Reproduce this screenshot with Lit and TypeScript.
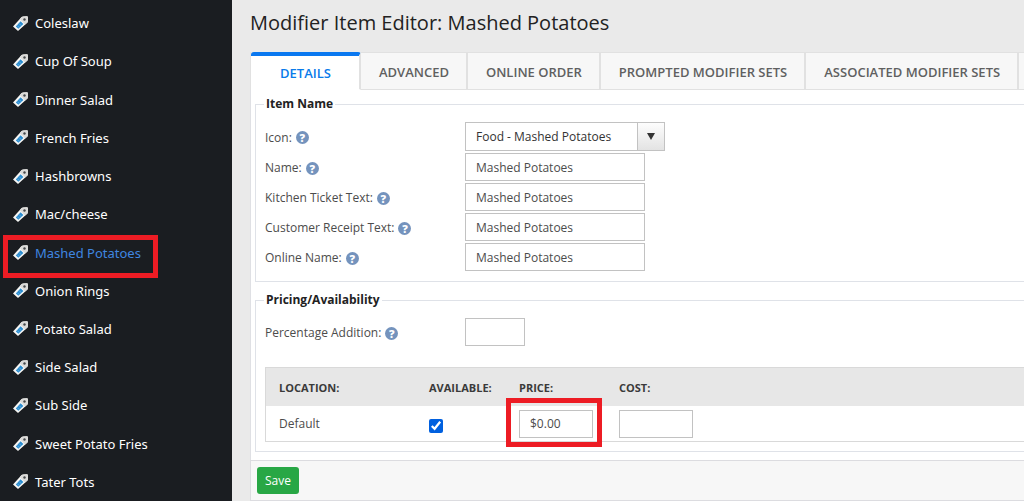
import { LitElement, html, css, svg } from "lit";
import { customElement, property, state } from "lit/decorators.js";
import { classMap } from "lit/directives/class-map.js";

const ITEMS = [
  "Coleslaw", "Cup Of Soup", "Dinner Salad", "French Fries", "Hashbrowns",
  "Mac/cheese", "Mashed Potatoes", "Onion Rings", "Potato Salad", "Side Salad",
  "Sub Side", "Sweet Potato Fries", "Tater Tots",
];

const TABS = [
  "DETAILS", "ADVANCED", "ONLINE ORDER", "PROMPTED MODIFIER SETS", "ASSOCIATED MODIFIER SETS",
];

const NAME_FIELDS = [
  { id: "name", label: "Name:" },
  { id: "kitchen", label: "Kitchen Ticket Text:" },
  { id: "receipt", label: "Customer Receipt Text:" },
  { id: "online", label: "Online Name:" },
];

const tagIcon = svg`
  <path d="M0 10.4 L8.6 1.1 Q9.2 0.4 10.2 0.4 L13.6 0.2 Q15 0.2 15 1.6 L14.9 5.2 Q14.8 6.2 14.2 6.8 L5 15 Z" fill="#f6f6f4"/>
  <path d="M8.6 1.1 Q9.2 0.4 10.2 0.4 L13.6 0.2 Q15 0.2 15 1.6 L14.9 5.2 Q14.8 6.2 14.2 6.8 L12.2 8.6 L6.8 3.1 Z" fill="#dadad8"/>
  <circle cx="11.5" cy="3.5" r="1.2" fill="#45484b"/>
  <path d="M2.8 10.4 L7.6 5.2 L10.4 8 L5.4 12.8 Z" fill="#2b8ccf"/>
  <path d="M4.4 9.7 L6.3 11.6 M6.3 7.7 L8.4 9.8" stroke="#8cc8ee" stroke-width="0.6"/>
`;

@customElement("item-sidebar")
export class ItemSidebar extends LitElement {
  @property() selected = "";

  static styles = css`
    :host { display: flex; flex-direction: column; background: #1a1d21; }
    .list {
      display: flex; flex-direction: column; flex: 1;
      list-style: none; margin: 0; padding: 4px 0 0;
    }
    .row { display: flex; flex: 1; min-height: 38px; position: relative; }
    .link {
      display: flex; align-items: center; gap: 7px; flex: 1;
      padding: 0 13px; color: #fff; text-decoration: none;
      font: 400 13px/18px "Noto Sans", "Open Sans", sans-serif;
    }
    .icon { flex: none; width: 15px; height: 15px; }
    .active .link { color: #3f86e0; }
    .active::after {
      content: ""; position: absolute; left: 3px; top: 2px;
      width: 155px; height: 43px; box-sizing: border-box;
      border: 5px solid #ed1c24; pointer-events: none; z-index: 1;
    }
  `;

  render() {
    return html`<ul class="list">
      ${ITEMS.map((name) => html`
        <li class=${classMap({ row: true, active: name === this.selected })}>
          <a class="link" href="#">
            <svg class="icon" viewBox="0 0 15 15" aria-hidden="true">${tagIcon}</svg>${name}
          </a>
        </li>`)}
    </ul>`;
  }
}

@customElement("app-root")
export class AppRoot extends LitElement {
  @state() private item = "Mashed Potatoes";
  @state() private tab = "DETAILS";

  static styles = css`
    :host {
      display: grid; grid-template-columns: 232px minmax(0, 1fr);
      min-height: 100vh; background: #eaeaea; color: #4c4c4c;
      font: 12px/18px "Open Sans", "Noto Sans", sans-serif;
    }
    .main { padding-left: 18px; overflow: hidden; }
    .title { margin: 0; padding: 8px 0 14px; font-size: 20px; line-height: 30px; font-weight: 400; color: #222; }
    .tabs { display: flex; height: 38px; box-sizing: border-box; border-left: 1px solid #e1e1e1; }
    .tab {
      flex: none; margin: 0; padding: 2px 17px 0 18px; border: solid #e1e1e1;
      border-width: 1px 2px 1px 0; background: #f7f7f7; color: #606060;
      font: 600 13px/18px "Open Sans", sans-serif; cursor: pointer;
    }
    .tab.on {
      padding: 0 28px 0 29px; background: #fff; color: #0a7bea; border-color: #e1e1e1;
      border-top: 4px solid #0a78f0; border-bottom-color: #fff; border-radius: 3px 3px 0 0;
    }
    .rest { flex: 1; background: #f7f7f7; border: solid #e1e1e1; border-width: 1px 0; }
    .panel { background: #fff; border-left: 1px solid #dfe0e4; padding: 4px 0 8px 4px; }
    .group { margin: 0 0 8px; padding: 0; min-width: 0; border: 1px solid #dfe2e8; border-right: 0; }
    .group:last-child { margin: 0; }
    .legend { margin-left: 8px; padding: 0 2px; font-weight: 700; line-height: 20px; color: #222; }
    .fields { display: grid; gap: 2px; padding: 8px 0 10px 9px; }
    .field { display: grid; grid-template-columns: 200px minmax(0, 1fr); align-items: center; }
    .label { display: flex; align-items: center; gap: 4px; padding-top: 2px; }
    .help {
      display: grid; place-items: center; width: 13px; height: 13px;
      border-radius: 50%; background: #7493bd; color: #fff;
      font: 800 11px/13px "Open Sans", sans-serif;
    }
    .box {
      box-sizing: border-box; width: 180px; height: 28px; padding: 0 10px;
      border: 1px solid #c2c2c2; border-radius: 0; background: #fff; color: #4c4c4c;
      font: 12px/18px "Open Sans", sans-serif;
    }
    .box.short { width: 60px; }
    .box.money { width: 74px; }
    .combo { display: grid; grid-template-columns: 1fr 28px; width: 200px; height: 29px; }
    .select {
      grid-area: 1 / 1 / 2 / 3; appearance: none; width: 100%; height: 29px; color: #333;
    }
    .arrow {
      grid-area: 1 / 2; box-sizing: border-box; display: grid; place-items: center;
      border: 1px solid #c2c2c2; pointer-events: none;
      background: linear-gradient(#fdfdfd, #e3e3e3);
    }
    .pricing { padding: 8px 0 9px 9px; display: grid; gap: 21px; }
    .table { width: 100%; border-collapse: separate; border-spacing: 0; border: 1px solid #d9d9d9; border-right: 0; table-layout: fixed; }
    .c-loc { width: 150px; }
    .c-avail { width: 90px; }
    .c-price { width: 100px; }
    .th {
      height: 38px; padding: 2px 0 0 13px; box-sizing: border-box; text-align: left;
      background: #e7e7e7; color: #3a3a3a; font-size: 11px; line-height: 16px; font-weight: 700;
    }
    .td { height: 35px; padding: 0 0 0 13px; box-sizing: border-box; position: relative; }
    .td .box { display: block; }
    .check { display: block; width: 14px; height: 14px; margin: 4px 0 0; accent-color: #0060df; }
    .marked::after {
      content: ""; position: absolute; left: 0; top: -8px;
      width: 96px; height: 49px; box-sizing: border-box;
      border: 5px solid #ed1c24; pointer-events: none;
    }
    .footer {
      background: #f7f7f7; border: 1px solid #dcdce0; border-right: 0; padding: 6px;
      display: flex;
    }
    .save {
      height: 27px; padding: 0 8px; border: 0; border-radius: 3px; background: #28a745; color: #fff;
      font: 12px/18px "Open Sans", sans-serif; cursor: pointer;
    }
  `;

  private label(id: string, text: string) {
    return html`<label class="label" for=${id}>${text}<span class="help" aria-hidden="true">?</span></label>`;
  }

  render() {
    return html`
      <item-sidebar .selected=${this.item}></item-sidebar>
      <main class="main">
        <h1 class="title">Modifier Item Editor: ${this.item}</h1>
        <div class="tabs" role="tablist">
          ${TABS.map((t) => html`
            <button class=${classMap({ tab: true, on: t === this.tab })} role="tab"
              aria-selected=${t === this.tab} @click=${() => (this.tab = t)}>${t}</button>`)}
          <div class="rest"></div>
        </div>
        <div class="panel">
          <fieldset class="group">
            <legend class="legend">Item Name</legend>
            <div class="fields">
              <div class="field">
                ${this.label("icon", "Icon:")}
                <div class="combo">
                  <select class="box select" id="icon"><option>Food - Mashed Potatoes</option></select>
                  <span class="arrow"><svg width="8" height="7" viewBox="0 0 8 7" aria-hidden="true"><path d="M0 0H8L4 7Z" fill="#333"/></svg></span>
                </div>
              </div>
              ${NAME_FIELDS.map((f) => html`
                <div class="field">
                  ${this.label(f.id, f.label)}
                  <input class="box" id=${f.id} type="text" .value=${this.item}>
                </div>`)}
            </div>
          </fieldset>
          <fieldset class="group">
            <legend class="legend">Pricing/Availability</legend>
            <div class="pricing">
              <div class="field">
                ${this.label("percent", "Percentage Addition:")}
                <input class="box short" id="percent" type="text">
              </div>
              <table class="table">
                <colgroup><col class="c-loc"><col class="c-avail"><col class="c-price"><col></colgroup>
                <thead>
                  <tr>
                    <th class="th" scope="col">LOCATION:</th>
                    <th class="th" scope="col" id="h-avail">AVAILABLE:</th>
                    <th class="th" scope="col" id="h-price">PRICE:</th>
                    <th class="th" scope="col" id="h-cost">COST:</th>
                  </tr>
                </thead>
                <tbody>
                  <tr>
                    <td class="td">Default</td>
                    <td class="td"><input class="check" type="checkbox" checked aria-labelledby="h-avail"></td>
                    <td class="td marked"><input class="box money" type="text" value="$0.00" aria-labelledby="h-price"></td>
                    <td class="td"><input class="box money" type="text" aria-labelledby="h-cost"></td>
                  </tr>
                </tbody>
              </table>
            </div>
          </fieldset>
        </div>
        <div class="footer"><button class="save" type="button">Save</button></div>
      </main>
    `;
  }
}
